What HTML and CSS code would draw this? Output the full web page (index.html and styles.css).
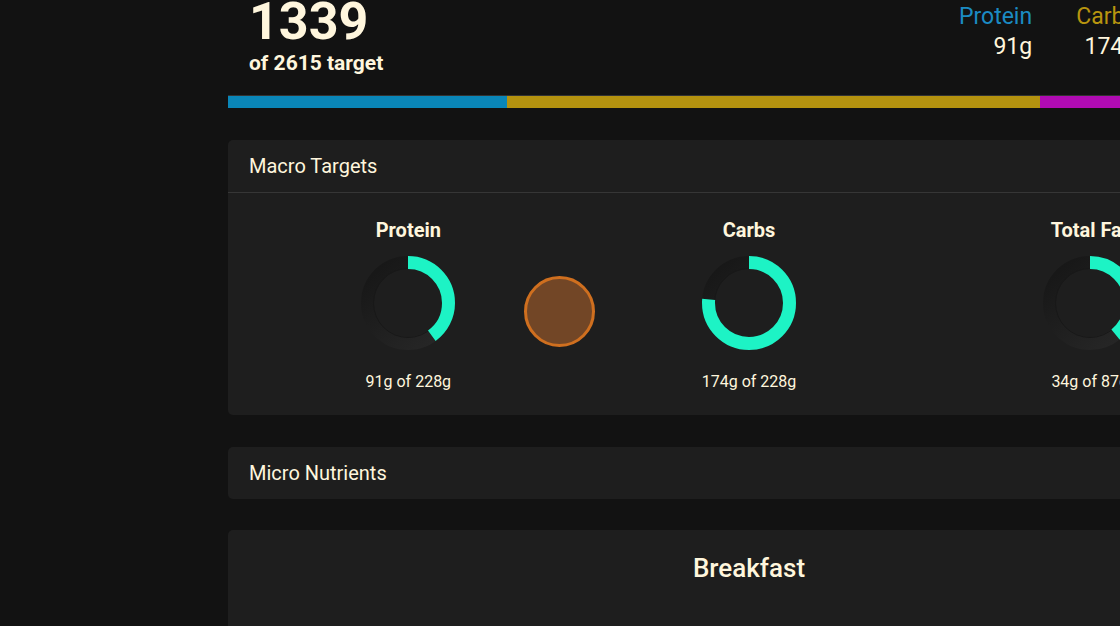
FILE: index.html
```html
<!DOCTYPE html>
<html lang="en">
<head>
    <meta charset="UTF-8">
    <meta name="viewport" content="width=device-width, initial-scale=1.0">
    <title>Daily Nutrition</title>

    <link rel="stylesheet" href="styles.css">
</head>
<body>
    <aside class="sidebar"></aside>

    <main class="main">
        <!-- Calories summary -->
        <header class="summary">
            <div class="calories">
                <div class="calories-total">1339</div>
                <div class="calories-target">of 2615 target</div>
            </div>
            <div class="stats">
                <div class="stat">
                    <div class="stat-label protein">Protein</div>
                    <div class="stat-value">91g</div>
                </div>
                <div class="stat">
                    <div class="stat-label carbs">Carbs</div>
                    <div class="stat-value">174g</div>
                </div>
                <div class="stat">
                    <div class="stat-label fat">Fat</div>
                    <div class="stat-value">34g</div>
                </div>
            </div>
        </header>

        <div class="macro-bar">
            <div class="seg protein-bg" style="width: 26.8%"></div>
            <div class="seg carbs-bg" style="width: 51.1%"></div>
            <div class="seg fat-bg" style="width: 22.1%"></div>
        </div>

        <!-- Macro targets -->
        <section class="card">
            <div class="card-header">Macro Targets</div>
            <div class="card-body macros">
                <div class="macro">
                    <h3>Protein</h3>
                    <svg class="ring" width="94" height="94" viewBox="0 0 94 94">
                        <defs>
                            <linearGradient id="track" x1="0" y1="0" x2="0.8" y2="1">
                                <stop offset="0" stop-color="#161616"/>
                                <stop offset="1" stop-color="#262626"/>
                            </linearGradient>
                        </defs>
                        <circle cx="47" cy="47" r="40.5" fill="none" stroke="url(#track)" stroke-width="13"/>
                        <circle cx="47" cy="47" r="34.5" fill="none" stroke="#181818" stroke-width="1"/>
                        <circle class="progress" cx="47" cy="47" r="40.5" stroke-dasharray="101.6 254.5"/>
                    </svg>
                    <p>91g of 228g</p>
                </div>
                <div class="macro">
                    <h3>Carbs</h3>
                    <svg class="ring" width="94" height="94" viewBox="0 0 94 94">
                        <circle cx="47" cy="47" r="40.5" fill="none" stroke="url(#track)" stroke-width="13"/>
                        <circle cx="47" cy="47" r="34.5" fill="none" stroke="#181818" stroke-width="1"/>
                        <circle class="progress" cx="47" cy="47" r="40.5" stroke-dasharray="194.2 254.5"/>
                    </svg>
                    <p>174g of 228g</p>
                </div>
                <div class="macro">
                    <h3>Total Fat</h3>
                    <svg class="ring" width="94" height="94" viewBox="0 0 94 94">
                        <circle cx="47" cy="47" r="40.5" fill="none" stroke="url(#track)" stroke-width="13"/>
                        <circle cx="47" cy="47" r="34.5" fill="none" stroke="#181818" stroke-width="1"/>
                        <circle class="progress" cx="47" cy="47" r="40.5" stroke-dasharray="99.5 254.5"/>
                    </svg>
                    <p>34g of 87g</p>
                </div>

                <div class="drag-dot"></div>
            </div>
        </section>

        <!-- Micro nutrients -->
        <section class="card">
            <div class="card-header no-border">Micro Nutrients</div>
        </section>

        <!-- Meals -->
        <section class="card meal">
            <h2>Breakfast</h2>
        </section>
    </main>
</body>
</html>
```

FILE: styles.css
```css
* {
    font-family: Roboto, "Liberation Sans", Arial, sans-serif;
    margin: 0;
    padding: 0;
    box-sizing: border-box;
}

body {
    background-color: #121212;
    color: #fff6dd;
    display: flex;
    overflow: hidden;
    height: 626px;
}

.sidebar {
    flex: 0 0 228px;
}

.main {
    flex: 0 0 1042px;
    width: 1042px;
}

/* Summary header */
.summary {
    display: flex;
    justify-content: space-between;
    align-items: flex-start;
    margin-top: -4px;
    padding: 0 51px 0 21px;
}

.calories-total {
    font-size: 52px;
    font-weight: bold;
    line-height: 52px;
}

.calories-target {
    font-size: 21px;
    font-weight: bold;
    line-height: 24px;
    margin-top: 3px;
}

.stats {
    display: flex;
    gap: 44px;
    margin-top: 6px;
}

.stat {
    text-align: right;
    font-size: 23px;
    line-height: 30px;
}

.protein { color: #1b8bc3; }
.carbs { color: #b8950f; }
.fat { color: #b30fb6; }

/* Calorie split bar */
.macro-bar {
    display: flex;
    height: 13px;
    margin-top: 20px;
    border-top: 1px solid #333;
}

.protein-bg { background-color: #0a86b8; }
.carbs-bg { background-color: #b4920f; }
.fat-bg { background-color: #b00bb3; }

/* Cards */
.card {
    background-color: #1e1e1e;
    border-radius: 5px;
    margin-top: 32px;
}

.card-header {
    font-size: 20px;
    line-height: 22px;
    padding: 15px 21px;
    border-bottom: 1px solid #363636;
}

.card-header.no-border {
    border-bottom: none;
}

.macros {
    position: relative;
    display: grid;
    grid-template-columns: repeat(3, 1fr);
    padding: 25px 10px 23px;
}

.macro {
    display: flex;
    flex-direction: column;
    align-items: center;
}

.macro h3 {
    font-size: 20px;
    line-height: 24px;
    font-weight: bold;
}

.ring {
    margin-top: 14px;
    display: block;
}

.ring .progress {
    fill: none;
    stroke: #1df3c5;
    stroke-width: 13;
    transform: rotate(-90deg);
    transform-origin: 47px 47px;
}

.macro p {
    font-size: 16px;
    line-height: 20px;
    margin-top: 22px;
}

/* floating drag handle */
.drag-dot {
    position: absolute;
    left: 296px;
    top: 83px;
    width: 71px;
    height: 71px;
    border-radius: 50%;
    background-color: #724626;
    border: 3px solid #cf6f1f;
}

.meal {
    height: 200px;
    margin-top: 31px;
    padding-top: 23px;
    text-align: center;
}

.meal h2 {
    font-size: 26px;
    font-weight: 500;
    line-height: 30px;
}
```
